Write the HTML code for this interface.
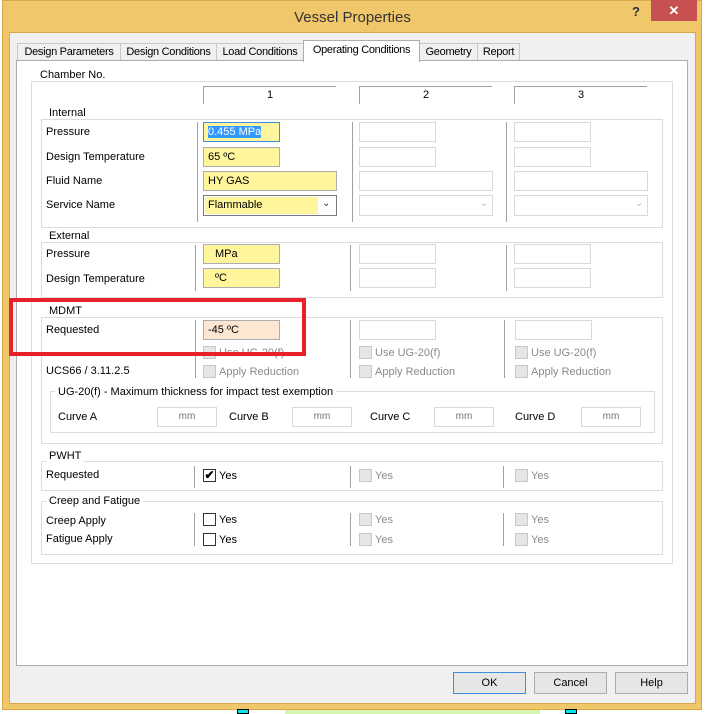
<!DOCTYPE html>
<html><head><style>
*{box-sizing:border-box;margin:0;padding:0}
body{width:705px;height:714px;background:#fff;position:relative;overflow:hidden;font-family:"Liberation Sans",sans-serif;font-size:11px;color:#000}
.a{position:absolute}
.t{position:absolute;white-space:nowrap;line-height:13px}
.g{position:absolute;border:1px solid #dcdcdc}
.gl{position:absolute;background:#fff;padding:0 3px;line-height:12px;white-space:nowrap}
.in{position:absolute;border:1px solid #adadad;background:#fff59d;padding-left:4px;line-height:18px;white-space:nowrap}
.dis{position:absolute;border:1px solid #d9d9d9;background:#fff}
.vl{position:absolute;width:1px;background:#a0a0a0}
.cb{position:absolute;width:13px;height:13px;border:1px solid #c8c8c8;background:#e6e6e6}
.cbe{position:absolute;width:13px;height:13px;border:1px solid #333;background:#fff}
.dt{position:absolute;color:#8a8a8a;white-space:nowrap;line-height:13px}
.mm{position:absolute;border:1px solid #d9d9d9;background:#fff;color:#777;font-size:10px;text-align:center;line-height:17px}
.tab{position:absolute;top:43px;height:18px;border:1px solid #c8c8c8;border-bottom:none;background:#f0f0f0;text-align:center;line-height:16px;white-space:nowrap;font-size:11px;letter-spacing:-0.3px;overflow:hidden}
.btn{position:absolute;top:672px;height:22px;width:73px;border:1px solid #acacac;background:#e6e6e6;text-align:center;line-height:20px}
</style></head><body>
<div class="a" style="left:2px;top:0;width:700px;height:710px;background:#f0c76b;border:1px solid #d9a847"></div>
<div class="a" style="left:237px;top:709px;width:12px;height:5px;background:#00e5f0;border:1px solid #000"></div>
<div class="a" style="left:565px;top:709px;width:12px;height:5px;background:#00e5f0;border:1px solid #000"></div>
<div class="a" style="left:285px;top:710px;width:255px;height:4px;background:#d6f5b0"></div>
<div class="t" style="left:0;width:705px;text-align:center;top:9px;font-size:15px;line-height:18px;color:#333">Vessel Properties</div>
<div class="t" style="left:632px;top:5px;font-size:13px;font-weight:bold;color:#333">?</div>
<div class="a" style="left:651px;top:0;width:46px;height:21px;background:#c75050;color:#fff;text-align:center;font-size:13px;line-height:21px;font-weight:bold">✕</div>
<div class="a" style="left:9px;top:32px;width:687px;height:672px;background:#f0f0f0;border:1px solid #d9a847"></div>
<div class="tab" style="left:17px;width:104px">Design Parameters</div>
<div class="tab" style="left:120px;width:97px">Design Conditions</div>
<div class="tab" style="left:216px;width:88px">Load Conditions</div>
<div class="tab" style="left:419px;width:59px">Geometry</div>
<div class="tab" style="left:477px;width:43px">Report</div>
<div class="a" style="left:16px;top:60px;width:672px;height:606px;background:#fff;border:1px solid #adadad"></div>
<div class="tab" style="left:303px;top:40px;width:117px;height:22px;background:#fff;border-color:#adadad;line-height:19px;z-index:2">Operating Conditions</div>

<div class="g" style="left:31px;top:81px;width:642px;height:483px"></div>
<div class="gl" style="left:37px;top:69px">Chamber No.</div>
<div class="a" style="left:203px;top:86px;width:133px;height:18px;border-left:1px solid #a0a0a0;border-top:1px solid #a0a0a0;text-align:center;line-height:16px">1</div>
<div class="a" style="left:359px;top:86px;width:133px;height:18px;border-left:1px solid #a0a0a0;border-top:1px solid #a0a0a0;text-align:center;line-height:16px">2</div>
<div class="a" style="left:514px;top:86px;width:133px;height:18px;border-left:1px solid #a0a0a0;border-top:1px solid #a0a0a0;text-align:center;line-height:16px">3</div>

<div class="g" style="left:41px;top:119px;width:622px;height:109px"></div>
<div class="gl" style="left:46px;top:107px">Internal</div>
<div class="vl" style="left:197px;top:122px;height:100px"></div>
<div class="vl" style="left:352px;top:122px;height:100px"></div>
<div class="vl" style="left:506px;top:122px;height:100px"></div>
<div class="t" style="left:46px;top:126px">Pressure</div>
<div class="t" style="left:46px;top:151px">Design Temperature</div>
<div class="t" style="left:46px;top:175px">Fluid Name</div>
<div class="t" style="left:46px;top:199px">Service Name</div>
<div class="in" style="left:203px;top:122px;width:77px;height:20px;border-color:#3c8fe0"><span style="background:#3399ff;color:#fff">0.455 MPa</span></div>
<div class="in" style="left:203px;top:147px;width:77px;height:20px">65 ºC</div>
<div class="in" style="left:203px;top:171px;width:134px;height:20px">HY GAS</div>
<div class="a" style="left:203px;top:195px;width:134px;height:21px;border:1px solid #7a7a7a;background:#fff"><div class="a" style="left:1px;top:1px;width:113px;height:17px;background:#fff59d;padding-left:3px;line-height:17px">Flammable</div><div class="a" style="left:118px;top:2px;font-size:10px;color:#333">⌄</div></div>
<div class="dis" style="left:359px;top:122px;width:77px;height:20px"></div>
<div class="dis" style="left:359px;top:147px;width:77px;height:20px"></div>
<div class="dis" style="left:359px;top:171px;width:134px;height:20px"></div>
<div class="dis" style="left:359px;top:195px;width:134px;height:21px"><div class="a" style="left:120px;top:2px;font-size:10px;color:#bbb">⌄</div></div>
<div class="dis" style="left:514px;top:122px;width:77px;height:20px"></div>
<div class="dis" style="left:514px;top:147px;width:77px;height:20px"></div>
<div class="dis" style="left:514px;top:171px;width:134px;height:20px"></div>
<div class="dis" style="left:514px;top:195px;width:134px;height:21px"><div class="a" style="left:120px;top:2px;font-size:10px;color:#bbb">⌄</div></div>

<div class="g" style="left:41px;top:242px;width:622px;height:56px"></div>
<div class="gl" style="left:46px;top:230px">External</div>
<div class="vl" style="left:195px;top:245px;height:46px"></div>
<div class="vl" style="left:350px;top:245px;height:46px"></div>
<div class="vl" style="left:506px;top:245px;height:46px"></div>
<div class="t" style="left:46px;top:248px">Pressure</div>
<div class="t" style="left:46px;top:273px">Design Temperature</div>
<div class="in" style="left:203px;top:244px;width:77px;height:20px;padding-left:11px">MPa</div>
<div class="in" style="left:203px;top:268px;width:77px;height:20px;padding-left:11px">ºC</div>
<div class="dis" style="left:359px;top:244px;width:77px;height:20px"></div>
<div class="dis" style="left:359px;top:268px;width:77px;height:20px"></div>
<div class="dis" style="left:514px;top:244px;width:77px;height:20px"></div>
<div class="dis" style="left:514px;top:268px;width:77px;height:20px"></div>

<div class="g" style="left:41px;top:317px;width:622px;height:127px"></div>
<div class="gl" style="left:46px;top:305px">MDMT</div>
<div class="vl" style="left:195px;top:320px;height:58px"></div>
<div class="vl" style="left:350px;top:320px;height:58px"></div>
<div class="vl" style="left:504px;top:320px;height:58px"></div>
<div class="t" style="left:46px;top:324px">Requested</div>
<div class="t" style="left:46px;top:365px">UCS66 / 3.11.2.5</div>
<div class="in" style="left:203px;top:320px;width:77px;height:20px;background:#fde6d2">-45 ºC</div>
<div class="dis" style="left:359px;top:320px;width:77px;height:20px"></div>
<div class="dis" style="left:515px;top:320px;width:77px;height:20px"></div>
<div class="cb" style="left:203px;top:346px"></div><div class="dt" style="left:219px;top:347px">Use UG-20(f)</div>
<div class="cb" style="left:359px;top:346px"></div><div class="dt" style="left:375px;top:347px">Use UG-20(f)</div>
<div class="cb" style="left:515px;top:346px"></div><div class="dt" style="left:531px;top:347px">Use UG-20(f)</div>
<div class="cb" style="left:203px;top:365px"></div><div class="dt" style="left:219px;top:366px">Apply Reduction</div>
<div class="cb" style="left:359px;top:365px"></div><div class="dt" style="left:375px;top:366px">Apply Reduction</div>
<div class="cb" style="left:515px;top:365px"></div><div class="dt" style="left:531px;top:366px">Apply Reduction</div>
<div class="g" style="left:50px;top:391px;width:605px;height:42px"></div>
<div class="gl" style="left:55px;top:386px">UG-20(f) - Maximum thickness for impact test exemption</div>
<div class="t" style="left:58px;top:411px">Curve A</div>
<div class="mm" style="left:157px;top:407px;width:60px;height:20px">mm</div>
<div class="t" style="left:229px;top:411px">Curve B</div>
<div class="mm" style="left:292px;top:407px;width:60px;height:20px">mm</div>
<div class="t" style="left:370px;top:411px">Curve C</div>
<div class="mm" style="left:434px;top:407px;width:60px;height:20px">mm</div>
<div class="t" style="left:515px;top:411px">Curve D</div>
<div class="mm" style="left:581px;top:407px;width:60px;height:20px">mm</div>

<div class="a" style="left:9px;top:298px;width:297px;height:58px;border:4px solid #e8202a"></div>

<div class="g" style="left:41px;top:461px;width:622px;height:30px"></div>
<div class="gl" style="left:46px;top:450px">PWHT</div>
<div class="vl" style="left:194px;top:466px;height:22px"></div>
<div class="vl" style="left:350px;top:466px;height:22px"></div>
<div class="vl" style="left:503px;top:466px;height:22px"></div>
<div class="t" style="left:46px;top:469px">Requested</div>
<div class="cbe" style="left:203px;top:469px;font-size:12px;line-height:11px;text-align:center;font-weight:bold">✔</div><div class="t" style="left:219px;top:470px">Yes</div>
<div class="cb" style="left:359px;top:469px"></div><div class="dt" style="left:375px;top:470px">Yes</div>
<div class="cb" style="left:515px;top:469px"></div><div class="dt" style="left:531px;top:470px">Yes</div>

<div class="g" style="left:41px;top:501px;width:622px;height:54px"></div>
<div class="gl" style="left:46px;top:495px">Creep and Fatigue</div>
<div class="vl" style="left:194px;top:513px;height:33px"></div>
<div class="vl" style="left:350px;top:513px;height:33px"></div>
<div class="vl" style="left:503px;top:513px;height:33px"></div>
<div class="t" style="left:46px;top:515px">Creep Apply</div>
<div class="t" style="left:46px;top:533px">Fatigue Apply</div>
<div class="cbe" style="left:203px;top:513px"></div><div class="t" style="left:219px;top:514px">Yes</div>
<div class="cbe" style="left:203px;top:533px"></div><div class="t" style="left:219px;top:534px">Yes</div>
<div class="cb" style="left:359px;top:513px"></div><div class="dt" style="left:375px;top:514px">Yes</div>
<div class="cb" style="left:359px;top:533px"></div><div class="dt" style="left:375px;top:534px">Yes</div>
<div class="cb" style="left:515px;top:513px"></div><div class="dt" style="left:531px;top:514px">Yes</div>
<div class="cb" style="left:515px;top:533px"></div><div class="dt" style="left:531px;top:534px">Yes</div>

<div class="btn" style="left:453px;border-color:#3c8fe0">OK</div>
<div class="btn" style="left:534px">Cancel</div>
<div class="btn" style="left:615px">Help</div>
</body></html>
